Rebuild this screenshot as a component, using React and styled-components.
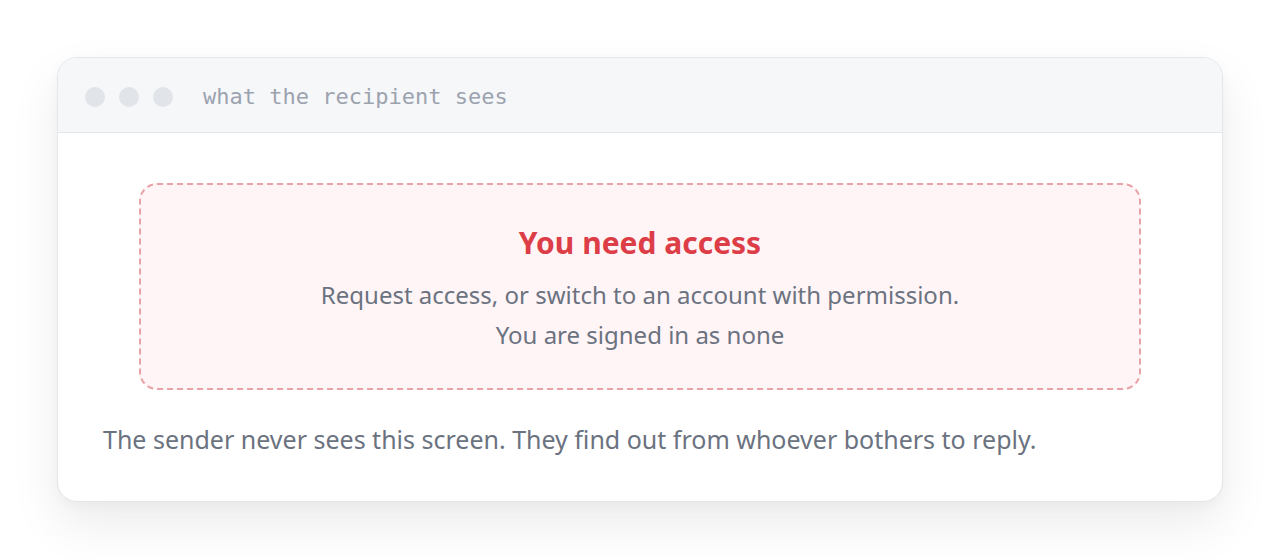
import React from 'react'
import styled, { createGlobalStyle } from 'styled-components'

const GlobalStyle = createGlobalStyle`
html, body {
  margin: 0;
  padding: 0;
  background: #ffffff;
}
body {
  font-family: "Noto Sans", "Open Sans", sans-serif;
}
`

const Page = styled.div`
width: 1280px;
height: 560px;
box-sizing: border-box;
padding: 57px 57px 0 57px;
`

const Window = styled.div`
background: #fff;
border: 1px solid #e4e6ea;
border-radius: 20px;
overflow: hidden;
box-shadow: 0 22px 50px rgba(0, 0, 0, 0.08), 0 4px 12px rgba(0, 0, 0, 0.03);
`

const TitleBar = styled.div`
display: flex;
align-items: center;
height: 75px;
padding: 3px 27px 0;
box-sizing: border-box;
background: #f6f7f9;
border-bottom: 1px solid #e3e5e8;
`

const Dots = styled.div`
display: flex;
gap: 14px;
margin-right: 30px;
`

const Dot = styled.span`
width: 20px;
height: 20px;
border-radius: 50%;
background: #e1e4e8;
`

const Caption = styled.span`
font-family: "DejaVu Sans Mono", "Liberation Mono", monospace;
font-size: 22px;
color: #9ca3af;
`

const Body = styled.div`
padding: 50px 45px 45px 45px;
`

const Notice = styled.div`
margin: 0 36px;
padding: 38px 20px 33px;
border: 2px dashed #e8a3a8;
border-radius: 18px;
background: #fff5f6;
text-align: center;
`

const Heading = styled.h2`
margin: 0 0 12px;
font-size: 30px;
line-height: 40px;
font-weight: 700;
color: #dc3d46;
`

const Line = styled.p`
margin: 0;
font-size: 24px;
line-height: 40px;
color: #6b7280;
`

const Footnote = styled.p`
margin: 32px 0 0;
font-size: 25px;
line-height: 34px;
color: #6b7280;
`

export default () => (
  <Page>
    <GlobalStyle />
    <Window>
      <TitleBar>
        <Dots>
          <Dot />
          <Dot />
          <Dot />
        </Dots>
        <Caption>what the recipient sees</Caption>
      </TitleBar>
      <Body>
        <Notice>
          <Heading>You need access</Heading>
          <Line>Request access, or switch to an account with permission.</Line>
          <Line>You are signed in as none</Line>
        </Notice>
        <Footnote>The sender never sees this screen. They find out from whoever bothers to reply.</Footnote>
      </Body>
    </Window>
  </Page>
)
